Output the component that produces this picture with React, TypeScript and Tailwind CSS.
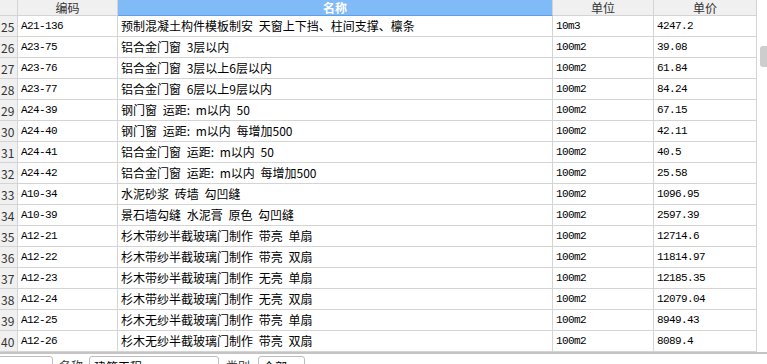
import React from "react";

type Row = { no: number; code: string; name: string; unit: string; price: string };

const rows: Row[] = [
  { no: 25, code: "A21-136", name: "预制混凝土构件模板制安 天窗上下挡、柱间支撑、檩条", unit: "10m3", price: "4247.2" },
  { no: 26, code: "A23-75", name: "铝合金门窗 3层以内", unit: "100m2", price: "39.08" },
  { no: 27, code: "A23-76", name: "铝合金门窗 3层以上6层以内", unit: "100m2", price: "61.84" },
  { no: 28, code: "A23-77", name: "铝合金门窗 6层以上9层以内", unit: "100m2", price: "84.24" },
  { no: 29, code: "A24-39", name: "钢门窗 运距: m以内 50", unit: "100m2", price: "67.15" },
  { no: 30, code: "A24-40", name: "钢门窗 运距: m以内 每增加500", unit: "100m2", price: "42.11" },
  { no: 31, code: "A24-41", name: "铝合金门窗 运距: m以内 50", unit: "100m2", price: "40.5" },
  { no: 32, code: "A24-42", name: "铝合金门窗 运距: m以内 每增加500", unit: "100m2", price: "25.58" },
  { no: 33, code: "A10-34", name: "水泥砂浆 砖墙 勾凹缝", unit: "100m2", price: "1096.95" },
  { no: 34, code: "A10-39", name: "景石墙勾缝 水泥膏 原色 勾凹缝", unit: "100m2", price: "2597.39" },
  { no: 35, code: "A12-21", name: "杉木带纱半截玻璃门制作 带亮 单扇", unit: "100m2", price: "12714.6" },
  { no: 36, code: "A12-22", name: "杉木带纱半截玻璃门制作 带亮 双扇", unit: "100m2", price: "11814.97" },
  { no: 37, code: "A12-23", name: "杉木带纱半截玻璃门制作 无亮 单扇", unit: "100m2", price: "12185.35" },
  { no: 38, code: "A12-24", name: "杉木带纱半截玻璃门制作 无亮 双扇", unit: "100m2", price: "12079.04" },
  { no: 39, code: "A12-25", name: "杉木无纱半截玻璃门制作 带亮 单扇", unit: "100m2", price: "8949.43" },
  { no: 40, code: "A12-26", name: "杉木无纱半截玻璃门制作 带亮 双扇", unit: "100m2", price: "8089.4" },
];

const cjk = "font-['Noto_Sans_CJK_SC',sans-serif]";
const mono = "font-['Liberation_Mono','Noto_Sans_CJK_SC',monospace] text-[11px] tracking-[-0.6px]";

export default function App() {
  return (
    <div className={`w-[767px] h-[364px] overflow-hidden bg-white text-black ${cjk}`}>
      <div className="flex h-[352px]">
        <div className="w-[757px] border-r border-[#d4d4d4]">
          {/* header */}
          <div className="flex h-[16px] text-[12px] leading-[15px] bg-[#f0f0f0] border-b border-[#d4d4d4]">
            <div className="w-[18px] border-r border-[#d4d4d4]" />
            <div className="w-[100px] text-center text-[#333] border-r border-[#d4d4d4]">编码</div>
            <div className="w-[435px] text-center text-white font-bold bg-[#80baf7] border-r border-[#d4d4d4] -mb-px border-b border-b-[#5e9fe8]">名称</div>
            <div className="w-[101px] text-center text-[#333] border-r border-[#d4d4d4]">单位</div>
            <div className="flex-1 text-center text-[#333]">单价</div>
          </div>
          {rows.map(r => (
            <div key={r.no} className="flex h-[21px] items-center border-b border-[#d4d4d4]">
              <div className="w-[18px] h-full bg-[#f0f0f0] border-r border-[#d4d4d4] text-[12px] leading-[20px] text-[#333] pl-[1px] pt-[1px]">{r.no}</div>
              <div className={`w-[100px] h-full border-r border-[#d4d4d4] pl-[3px] leading-[20px] ${mono}`}>{r.code}</div>
              <div className="w-[435px] h-full border-r border-[#d4d4d4] pl-[3px] text-[12px] leading-[20px] whitespace-nowrap overflow-hidden [word-spacing:3px]">{r.name}</div>
              <div className={`w-[101px] h-full border-r border-[#d4d4d4] pl-[3px] leading-[20px] ${mono}`}>{r.unit}</div>
              <div className={`flex-1 h-full pl-[3px] leading-[20px] ${mono}`}>{r.price}</div>
            </div>
          ))}
        </div>
        <div className="flex-1 relative bg-white">
          <div className="absolute left-[3px] right-0 top-[46px] h-[21px] rounded-l-[3px] bg-[#cdcdcd]" />
        </div>
      </div>
      <div className="h-[2px] bg-[#c4c4c4]" />
      <div className="flex items-start gap-[3px] pt-[2px] text-[12px] leading-[14px]">
        <div className="w-[55px] h-[20px] border border-[#bdbdbd] rounded-[3px] -ml-[2px]" />
        <span className="w-[30px] pl-[3px] text-[#333] mt-[3px]">名称</span>
        <div className="w-[130px] h-[20px] border border-[#bdbdbd] rounded-[3px] px-[4px] pt-[3px]">建筑工程</div>
        <span className="w-[33px] pl-[4px] text-[#333] mt-[3px]">类别</span>
        <div className="w-[47px] h-[20px] border border-[#bdbdbd] rounded-[3px] px-[4px] pt-[3px]">全部</div>
      </div>
    </div>
  );
}
